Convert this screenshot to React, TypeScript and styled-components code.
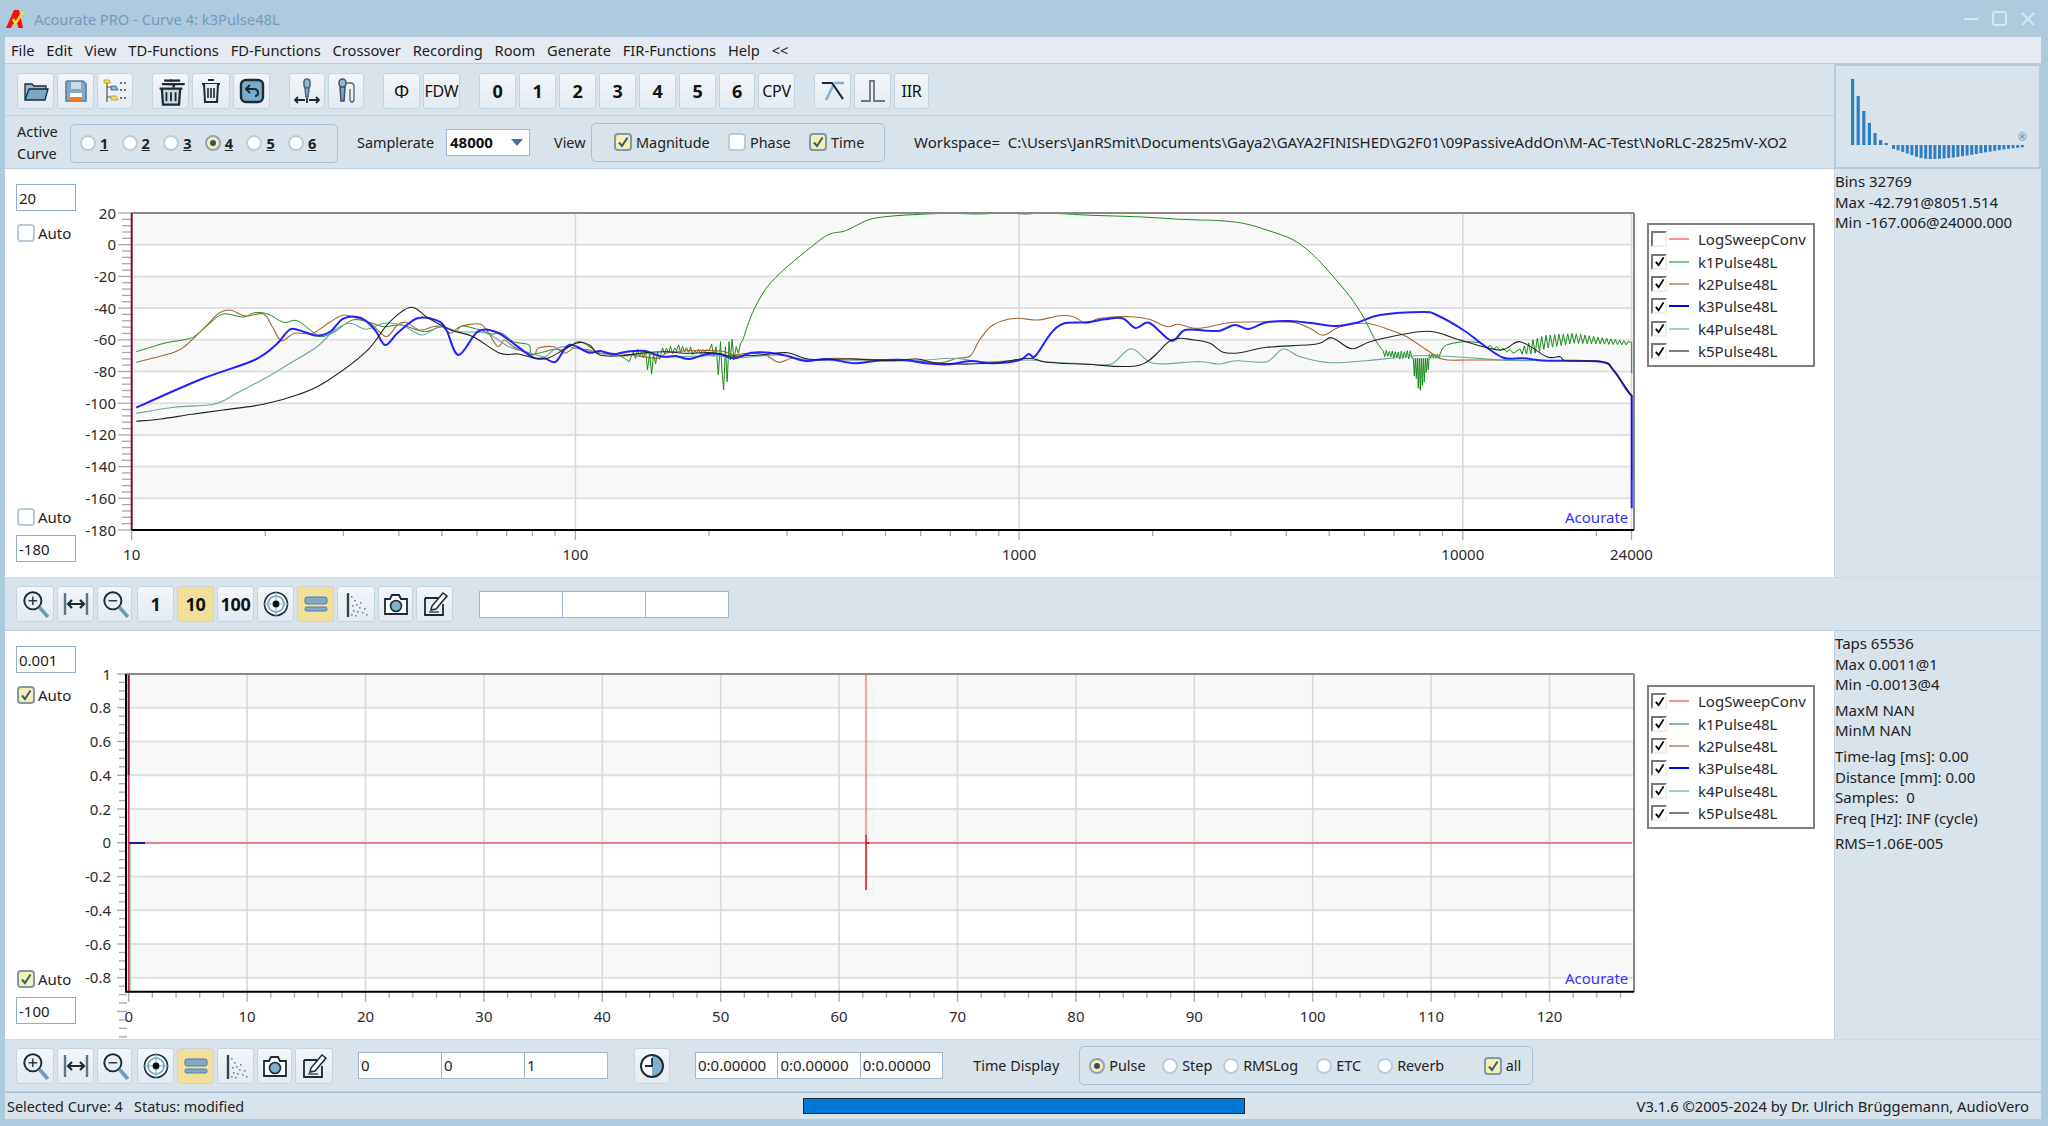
import React from "react";
import styled, { createGlobalStyle } from "styled-components";

const GlobalStyle = createGlobalStyle`
  html, body { margin: 0; padding: 0; background: #aecbdd; }
  * { box-sizing: border-box; }
  body { font-family: "Noto Sans", "Open Sans", sans-serif; font-size: 15px; color: #222; }
`;

const Window = styled.div`
  width: 2048px;
  height: 1126px;
  display: flex;
  flex-direction: column;
  background: #aecbdd;
  overflow: hidden;
`;

const TitleBar = styled.div`
  height: 37px;
  flex: none;
  display: flex;
  align-items: center;
  padding-left: 6px;
  color: #6f9cbb;
  font-size: 14.7px;
  gap: 6px;
`;

const WindowButtons = styled.div`
  margin-left: auto;
  margin-right: 13px;
  display: flex;
  gap: 14px;
  align-items: center;
`;

const Body = styled.div`
  flex: 1;
  display: flex;
  flex-direction: column;
  margin: 0 7px 7px 5px;
  background: #d9e3ec;
`;

const MenuBar = styled.div`
  height: 27px;
  flex: none;
  display: flex;
  align-items: center;
  gap: 11.8px;
  padding-left: 6px;
  background: #e6ebf3;
  border-bottom: 1px solid #bccdda;
  color: #1c1c1c;
  font-size: 14.7px;
`;

const TopBlock = styled.div`
  display: flex;
  height: 105px;
  flex: none;
`;

const ToolStack = styled.div`
  flex: 1;
  display: flex;
  flex-direction: column;
`;

const LogoPanel = styled.div`
  width: 207px;
  border: 2px solid #b4cbdc;
  background: #d9e3ec;
  display: flex;
  align-items: center;
  justify-content: center;
`;

const Toolbar = styled.div<{ $h: number; $top?: boolean }>`
  height: ${(p) => p.$h}px;
  flex: none;
  display: flex;
  align-items: center;
  padding-left: ${(p) => (p.$top ? 12 : 11)}px;
  padding-top: ${(p) => (p.$top ? 2 : 0)}px;
  background: #d9e3ec;
  border-bottom: 1px solid #bccfdf;
`;

const ButtonGroup = styled.div<{ $after?: number }>`
  display: flex;
  gap: 3px;
  margin-right: ${(p) => p.$after ?? 19}px;
`;

const ToolButton = styled.div<{ $w?: number; $on?: boolean; $bold?: boolean; $size?: number }>`
  width: ${(p) => p.$w ?? 37}px;
  height: 36px;
  display: flex;
  align-items: center;
  justify-content: center;
  border: 1px solid #c6d4e0;
  border-radius: 3px;
  background: ${(p) => (p.$on ? "#f1df9c" : "linear-gradient(#f3f6f9, #e3eaf1)")};
  font-size: ${(p) => p.$size ?? 16}px;
  font-weight: ${(p) => (p.$bold ? 700 : 400)};
  color: #111;
  letter-spacing: -0.3px;
`;

const OptionsRow = styled.div`
  height: 53px;
  display: flex;
  align-items: center;
  padding-left: 12px;
  background: #d9e3ec;
  border-bottom: 1px solid #bccfdf;
`;

const ActiveLabel = styled.div`
  width: 53px;
  line-height: 22px;
  color: #222;
  font-size: 14.5px;
`;

const GroupBox = styled.div<{ $w: number; $h: number; $pad: number; $after?: number; $low?: boolean }>`
  width: ${(p) => p.$w}px;
  height: ${(p) => p.$h}px;
  flex: none;
  display: flex;
  align-items: center;
  padding-left: ${(p) => p.$pad}px;
  border: 1.5px solid #a9bfd6;
  border-radius: 5px;
  margin-right: ${(p) => p.$after ?? 0}px;
  margin-top: ${(p) => (p.$low ? 2 : 0)}px;
`;

const Option = styled.div<{ $w: number }>`
  width: ${(p) => p.$w}px;
  flex: none;
  display: flex;
  align-items: center;
  gap: 4px;
  font-size: 14.4px;
`;

const RadioDot = styled.span<{ $on?: boolean }>`
  width: 16px;
  height: 16px;
  flex: none;
  border-radius: 50%;
  border: 2px solid ${(p) => (p.$on ? "#8fa4b5" : "#bccdd9")};
  background: ${(p) => (p.$on ? "#f6eeb4" : "#fff")};
  display: flex;
  align-items: center;
  justify-content: center;
  &::after {
    content: "";
    display: ${(p) => (p.$on ? "block" : "none")};
    width: 6px;
    height: 6px;
    border-radius: 50%;
    background: #3d4b6c;
  }
`;

const CurveNumber = styled.span`
  font-weight: 700;
  text-decoration: underline;
  font-size: 14.5px;
`;

const CheckFrame = styled.span<{ $on?: boolean }>`
  width: 18px;
  height: 18px;
  flex: none;
  display: flex;
  align-items: center;
  justify-content: center;
  border-radius: 4px;
  border: 2px solid ${(p) => (p.$on ? "#7f98ad" : "#b9cad7")};
  background: ${(p) => (p.$on ? "#f7efb2" : "#fff")};
`;

const Plain = styled.div<{ $ml?: number; $w?: number }>`
  margin-left: ${(p) => p.$ml ?? 0}px;
  ${(p) => (p.$w ? `width: ${p.$w}px; flex: none;` : "")}
  white-space: pre;
  font-size: 14.4px;
`;

const WorkspaceText = styled.div`
  white-space: pre;
`;

const SelectBox = styled.div`
  width: 84px;
  height: 27px;
  flex: none;
  display: flex;
  align-items: center;
  justify-content: space-between;
  padding: 0 4px 0 3px;
  background: #fff;
  border: 1.5px solid #a3b9d3;
  font-weight: 700;
  color: #111;
`;

const SelectArrow = styled.span`
  width: 0;
  height: 0;
  border-left: 6px solid transparent;
  border-right: 6px solid transparent;
  border-top: 7px solid #4a6f9e;
  margin-right: 2px;
`;

const Row = styled.div`
  height: 409px;
  flex: none;
  display: flex;
`;

const ChartPane = styled.div`
  width: 1829px;
  flex: none;
  display: flex;
  background: #fff;
  border-bottom: 1px solid #d2d9df;
`;

const ScaleColumn = styled.div`
  width: 71px;
  flex: none;
  display: flex;
  flex-direction: column;
  padding: 15px 0 15px 11px;
`;

const ScaleInput = styled.div`
  width: 60px;
  height: 27px;
  flex: none;
  display: flex;
  align-items: center;
  padding-left: 2px;
  border: 1.5px solid #93accb;
  background: #fff;
  color: #222;
`;

const AutoRow = styled.div<{ $bottom?: boolean }>`
  display: flex;
  align-items: center;
  gap: 3px;
  padding-left: 1px;
  margin-top: ${(p) => (p.$bottom ? "auto" : "12px")};
  margin-bottom: ${(p) => (p.$bottom ? "8px" : "0")};
`;

const ChartSvg = styled.svg`
  width: 1571px;
  height: 407px;
  flex: none;
  display: block;
  overflow: visible;
`;

const AxisText = styled.text`
  font-family: "Noto Sans", "Open Sans", sans-serif;
  font-size: 15px;
  fill: #2b2b2b;
`;

const BrandText = styled.text`
  font-family: "Noto Sans", "Open Sans", sans-serif;
  font-size: 15px;
  fill: #3333ff;
`;

const RegMark = styled.text`
  font-family: "Noto Sans", sans-serif;
  font-size: 10px;
  fill: #3a86c6;
`;

const Legend = styled.div<{ $top: number }>`
  width: 168px;
  height: 144px;
  flex: none;
  margin-top: ${(p) => p.$top}px;
  padding: 3px 0 0 2px;
  border: 2px solid #808080;
  background: #fff;
`;

const LegendRow = styled.div`
  height: 22.4px;
  display: flex;
  align-items: center;
  color: #2b2b2b;
  white-space: nowrap;
`;

const LegendBox = styled.span`
  width: 16px;
  height: 16px;
  flex: none;
  display: flex;
  align-items: center;
  justify-content: center;
  border-top: 2px solid #777;
  border-left: 2px solid #777;
  border-right: 2px solid #eee;
  border-bottom: 2px solid #eee;
`;

const LegendSwatch = styled.span<{ $c: string }>`
  width: 20px;
  height: 2px;
  flex: none;
  margin: 0 9px 0 2px;
  background: ${(p) => p.$c};
`;

const InfoPanel = styled.div`
  flex: 1;
  padding: 2px 0 0 0;
  border-left: 1px solid #c6d3de;
  border-bottom: 1px solid #d2d9df;
  background: #d9e3ec;
`;

const InfoLine = styled.div<{ $gap?: number }>`
  height: 20.6px;
  line-height: 20.6px;
  margin-top: ${(p) => p.$gap ?? 0}px;
  white-space: pre;
  color: #222;
`;

const FieldStrip = styled.div<{ $ml: number; $w: number }>`
  display: flex;
  margin-left: ${(p) => p.$ml}px;
  & > div {
    width: ${(p) => p.$w}px;
    height: 27px;
    padding-left: 2px;
    line-height: 25px;
    background: #fff;
    border: 1.5px solid #9fb5d1;
    margin-right: -1px;
    color: #222;
  }
`;

const StatusBar = styled.div`
  flex: 1;
  display: flex;
  align-items: center;
  padding: 0 12px 0 2px;
  border-top: 1px solid #a9c3da;
  background: #d9e3ec;
`;

const ProgressBar = styled.div`
  width: 442px;
  height: 16px;
  flex: none;
  background: #0078d7;
  border: 1px solid #1c2a36;
`;

const VersionText = styled.div`
  margin-left: auto;
  font-size: 14.75px;
`;

const WaveSvg = styled.svg`
  margin: 12px 0 0 5px;
  flex: none;
`;

// window glyphs -------------------------------------------------------------

const AppLogo = () => (
  <svg width="22" height="22" viewBox="0 0 22 22">
    <path d="M0 20 L8 2 H13 L17 20 H12.5 L11.5 16 H7 L5 20 Z" fill="#ee1111" />
    <path d="M7 11 L9.5 15.5 L17 4" fill="none" stroke="#f4e21a" strokeWidth="2.6" />
  </svg>
);

const Check = ({ c = "#3b5a80", s = 12 }: { c?: string; s?: number }) => (
  <svg width={s} height={s} viewBox="0 0 12 12">
    <path d="M2 6.5 L5 10 L10.5 1.5" fill="none" stroke={c} strokeWidth="2" />
  </svg>
);

const Icon = ({ children, s = 28 }: { children: React.ReactNode; s?: number }) => (
  <svg width={s} height={s} viewBox="0 0 28 28" fill="none" stroke="#1d2a33" strokeWidth="1.6">
    {children}
  </svg>
);

const FolderIcon = () => (
  <Icon>
    <path d="M3 22 V7 H10 L12 9 H24 V12" fill="#8fb9d4" strokeWidth="1.3" />
    <path d="M3 23 L7 12 H26 L23 23 Z" fill="#7aa9c8" strokeWidth="1.3" />
  </Icon>
);

const SaveIcon = () => (
  <Icon>
    <path d="M5 4 H21 L24 7 V24 H4 V5 Z" fill="#7fa9c8" stroke="#5b7f9c" />
    <rect x="9" y="5" width="10" height="7" fill="#c9dbe8" stroke="none" />
    <rect x="8" y="16" width="12" height="8" fill="#fff" stroke="none" />
    <rect x="8" y="20" width="12" height="4" fill="#f47a20" stroke="none" />
  </Icon>
);

const TreeIcon = () => (
  <Icon>
    <path d="M6 5 V25 M6 10 H10 M6 20 H10" stroke="#555" strokeWidth="1.2" />
    <path d="M3 3 H8 L10 6 H3 Z" fill="#f3df5a" stroke="#b09a20" strokeWidth="0.8" />
    <path d="M10 9 H15 L17 13 H10 Z" fill="#8db6d2" stroke="#456" strokeWidth="0.8" />
    <path d="M10 19 H15 L17 23 H10 Z" fill="#f3df5a" stroke="#b09a20" strokeWidth="0.8" />
    <path d="M19 6 H26 M19 13 H26 M19 21 H26" stroke="#444" strokeDasharray="2 2" strokeWidth="1.4" />
  </Icon>
);

const BinsIcon = () => (
  <Icon s={32}>
    <path d="M8 5 H15 M6 8 H17 L16 11" strokeWidth="2" />
    <path d="M13 5 H22 M11 8 H26" strokeWidth="2" />
    <path d="M4 12 H24 M6 12 L7 26 H21 L22 12" strokeWidth="2" fill="#c8dae6" />
    <path d="M10 15 V23 M14 15 V23 M18 15 V23" strokeWidth="1.6" />
  </Icon>
);

const BinIcon = () => (
  <Icon>
    <path d="M11 3 H17 M5 7 H23" strokeWidth="2.2" />
    <path d="M7 7 L8 25 H20 L21 7" strokeWidth="2" fill="#e4ecf2" />
    <path d="M11 11 V21 M14 11 V21 M17 11 V21" strokeWidth="1.6" />
  </Icon>
);

const RestoreIcon = () => (
  <Icon>
    <rect x="3" y="3" width="22" height="22" rx="5" fill="#7aaccb" strokeWidth="2.4" />
    <path d="M9 12 H16 Q20 12 20 16 Q20 19 17 19" strokeWidth="2" />
    <path d="M12 8 L8 12 L12 16" strokeWidth="2" />
  </Icon>
);

const MicMoveIcon = () => (
  <Icon>
    <rect x="11" y="2" width="6" height="9" rx="3" fill="#8fb9d4" stroke="#567" />
    <path d="M12 11 L13 20 H15 L16 11 Z" fill="#8fb9d4" stroke="#567" />
    <path d="M2 23 H12 M16 23 H26 M5 20 L2 23 L5 26 M23 20 L26 23 L23 26 M14 21 V26" strokeWidth="1.8" />
  </Icon>
);

const MicCableIcon = () => (
  <Icon>
    <rect x="7" y="2" width="7" height="8" rx="3.5" fill="#8fb9d4" stroke="#456" />
    <path d="M8 10 L9 24 H12 L13 10 Z" fill="#7aa9c8" stroke="#456" />
    <path d="M15 6 H19 Q22 6 22 10 V22 Q22 25 20 25 Q18 25 18 22 V12" stroke="#566" strokeWidth="1.3" />
  </Icon>
);

const CrossoverIcon = () => (
  <Icon>
    <path d="M14 9 L7 23" stroke="#84b5d2" strokeWidth="2.6" />
    <path d="M3 6 H13 L24 22" strokeWidth="2.2" />
    <path d="M25 6 H15" stroke="#84b5d2" strokeWidth="2.6" />
  </Icon>
);

const PulseIcon = () => (
  <Icon>
    <path d="M2 24 H11 V4 H15 V24 H26" stroke="#6c7780" strokeWidth="1.8" />
  </Icon>
);

const ZoomIcon = ({ plus }: { plus: boolean }) => (
  <Icon s={30}>
    <circle cx="12" cy="11" r="8" fill="#e7eff5" strokeWidth="1.8" />
    <path d="M18 17 L26 26" stroke="#6b9abc" strokeWidth="3.4" />
    <path d="M8 11 H16" strokeWidth="1.3" />
    {plus && <path d="M12 7 V15" strokeWidth="1.3" />}
  </Icon>
);

const FitIcon = () => (
  <Icon>
    <path d="M3 3 V25 M25 3 V25" stroke="#5e7484" strokeWidth="2.4" />
    <path d="M7 14 H21 M10 10 L6 14 L10 18 M18 10 L22 14 L18 18" strokeWidth="2.2" />
  </Icon>
);

const TargetIcon = () => (
  <Icon>
    <circle cx="14" cy="14" r="11.5" fill="#fff" strokeWidth="1.6" />
    <circle cx="14" cy="14" r="8" stroke="#7fb0ce" strokeWidth="2" />
    <path d="M14 1 V27 M1 14 H27" stroke="#7fb0ce" strokeWidth="1" />
    <circle cx="14" cy="14" r="3.4" fill="#111" stroke="none" />
  </Icon>
);

const BarsIcon = () => (
  <Icon>
    <rect x="3" y="7" width="22" height="7" rx="2" fill="#7ea9c8" stroke="#5d7f99" strokeWidth="1" />
    <rect x="3" y="17" width="22" height="4" rx="1.5" fill="#7ea9c8" stroke="#5d7f99" strokeWidth="1" />
  </Icon>
);

const ScatterIcon = () => {
  const dots = [[9, 6], [12, 10], [10, 15], [14, 14], [17, 17], [11, 20], [15, 21], [20, 22], [18, 12], [13, 25], [22, 18], [9, 24], [24, 24]];
  return (
    <Icon>
      <path d="M6 3 V27" stroke="#344" strokeWidth="2.4" />
      {dots.map(([x, y]) => (
        <rect key={`${x}-${y}`} x={x} y={y} width="1.6" height="1.6" fill="#6c8ba0" stroke="none" />
      ))}
    </Icon>
  );
};

const CameraIcon = () => (
  <Icon>
    <path d="M3 9 H8 L10 5 H17 L19 9 H25 V24 H3 Z" fill="#fff" strokeWidth="1.8" />
    <circle cx="14" cy="16" r="5.5" fill="#7fb0ce" strokeWidth="1.6" />
  </Icon>
);

const NoteIcon = () => (
  <Icon>
    <path d="M4 8 H17 M4 8 V25 H22 V14" strokeWidth="1.8" fill="#e7eef3" />
    <path d="M10 20 L11 16 L22 3 L26 6 L15 19 Z" fill="#fff" strokeWidth="1.5" />
    <path d="M8 22 H18" strokeWidth="1.2" />
  </Icon>
);

const ClockIcon = () => (
  <Icon>
    <circle cx="14" cy="14" r="11" fill="#fff" stroke="none" />
    <path d="M14 3 A11 11 0 0 1 14 25 Z" fill="#7fb0ce" stroke="none" />
    <circle cx="14" cy="14" r="11" strokeWidth="2" />
    <path d="M14 6 V14 H7" strokeWidth="1.8" />
  </Icon>
);

const WaveLogo = () => {
  const tall = [66, 49, 34, 22, 12, 5, 2];
  const deep = Array.from({ length: 29 }, (_, i) => {
    const t = (i - 8) / 10;
    return Math.max(1.5, 14 * Math.exp(-t * t * (i < 8 ? 2 : 0.45)));
  });
  return (
    <WaveSvg width="180" height="88" viewBox="0 0 180 88">
      {tall.map((h, i) => (
        <rect key={i} x={1 + i * 5.6} y={66 - h} width="3.2" height={h} fill="#2f7fc2" />
      ))}
      {deep.map((h, i) => (
        <rect key={i} x={42 + i * 4.6} y={66} width="3" height={h} fill="#2f7fc2" />
      ))}
      <RegMark x="168" y="62">®</RegMark>
    </WaveSvg>
  );
};

// chart data, traced off the plot in three pieces ----------------------------

type Pt = [number, number];

const piece = (ox: number, sx: number, pts: Pt[]): Pt[] => pts.map(([x, y]) => [ox + x / sx, 190 + y / 3]);
const left = (pts: Pt[]) => piece(0, 2.24, pts);
const mid = (pts: Pt[]) => piece(600, 2.24, pts);
const right = (pts: Pt[]) => piece(1200, 3, pts);

const zigzag = (from: number, to: number, step: number, hi: (x: number) => number, lo: (x: number) => number): Pt[] => {
  const out: Pt[] = [];
  let up = true;
  for (let x = from; x < to; x += step) {
    out.push([x, up ? hi(x) : lo(x)]);
    up = !up;
  }
  return out;
};

const fmt = ([x, y]: Pt) => `${x.toFixed(1)},${y.toFixed(1)}`;

const lineTo = (pts: Pt[]) => pts.map((p) => `L${fmt(p)}`).join(" ");

// catmull-rom through the traced points, the plot lines are smooth
const curveTo = (pts: Pt[]) => {
  let d = `L${fmt(pts[0])}`;
  for (let i = 0; i < pts.length - 1; i++) {
    const a = pts[i - 1] ?? pts[i];
    const b = pts[i];
    const c = pts[i + 1];
    const e = pts[i + 2] ?? c;
    const c1: Pt = [b[0] + (c[0] - a[0]) / 6, b[1] + (c[1] - a[1]) / 6];
    const c2: Pt = [c[0] - (e[0] - b[0]) / 6, c[1] - (e[1] - b[1]) / 6];
    d += ` C${fmt(c1)} ${fmt(c2)} ${fmt(c)}`;
  }
  return d;
};

const startAt = (d: string) => d.replace(/^L/, "M");

const sawCenter = (x: number) => (x < 1040 ? 485 - ((x - 960) / 80) * 30 : x < 1120 ? 455 - ((x - 1040) / 80) * 10 : 445 + ((x - 1120) / 170) * 15);
const sawAmp = (x: number) => (x < 1000 ? 8 + (x - 960) / 3 : 22 - ((x - 1000) / 290) * 17);
const bell = (x: number, c: number, w: number) => Math.exp(-(((x - c) / w) ** 2));
const wobble = (x: number) => Math.sin(x * 12.9898) * 0.5 + Math.sin(x * 4.1) * 0.5;

const k1Path = startAt(
  [
    curveTo([
      ...left([[305, 485], [335, 473], [370, 459], [420, 447], [440, 435], [470, 400], [500, 372], [545, 381], [570, 368], [600, 372], [635, 397], [665, 392], [700, 425], [720, 440], [750, 425], [790, 390], [830, 398], [860, 410], [900, 405], [950, 425], [990, 410], [1020, 425], [1035, 408], [1075, 420], [1100, 432], [1125, 430], [1150, 455], [1185, 465], [1190, 492], [1220, 485], [1240, 478], [1265, 478], [1295, 455], [1320, 470]]),
      ...mid([[0, 490], [40, 495], [65, 515]]),
    ]),
    lineTo(mid(zigzag(75, 135, 4.5, (x) => 486 + wobble(x) * 10, (x) => 505 + wobble(x) * 8 + 52 * bell(x, 113, 9)))),
    lineTo(mid(zigzag(140, 250, 4.5, (x) => 468 + (x - 140) * 0.1 + wobble(x) * 9, (x) => 488 + wobble(x + 3) * 7))),
    lineTo(mid([[250, 462], [255, 500], [260, 470], [265, 555], [270, 455], [273, 540], [277, 600], [281, 470], [285, 575], [289, 455], [292, 510], [296, 448], [300, 510], [305, 470], [310, 490], [315, 460]])),
    curveTo(mid([[320, 450], [335, 390], [350, 345], [375, 290], [415, 235], [460, 185], [510, 135], [550, 122], [600, 90], [640, 80], [700, 74], [780, 70], [850, 72], [900, 68], [950, 72], [1000, 69], [1100, 76], [1200, 80], [1300, 88]])),
    curveTo(right([[0, 90], [60, 92], [130, 100], [200, 120], [280, 150], [340, 195], [400, 260], [450, 320], [490, 380], [520, 440], [545, 478]])),
    lineTo(right(zigzag(550, 640, 4.5, (x) => 484 + wobble(x) * 3, (x) => 500 + (x - 550) / 12 + wobble(x) * 4))),
    lineTo(right(zigzag(640, 688, 3, () => 505, (x) => 600 - Math.abs(x - 660) * 2.6 + wobble(x) * 12))),
    lineTo(right(zigzag(688, 722, 4, () => 492, () => 505))),
    curveTo(right([[725, 480], [740, 465], [790, 455], [840, 458]])),
    lineTo(right(zigzag(850, 950, 10, (x) => 462 + (x - 850) / 5, (x) => 472 + (x - 850) / 5))),
    lineTo(right(zigzag(960, 1290, 6.5, (x) => sawCenter(x) - sawAmp(x), (x) => sawCenter(x) + sawAmp(x)))),
    lineTo(right([[1295, 458], [1295, 550]])),
  ].join(" "),
);

const k2Path = startAt(
  curveTo([
    ...left([[305, 517], [390, 487], [420, 462], [460, 410], [490, 370], [515, 360], [550, 378], [590, 372], [610, 410], [630, 452], [660, 430], [700, 430], [740, 395], [770, 375], [800, 385], [830, 400], [865, 440], [890, 405], [910, 397], [940, 420], [970, 410], [990, 410], [1010, 430], [1030, 410], [1075, 402], [1095, 430], [1115, 470], [1130, 450], [1150, 470], [1195, 495], [1205, 475], [1240, 470], [1265, 490], [1285, 475], [1320, 480]]),
    ...mid([[0, 490], [30, 490], [70, 495], [130, 505], [150, 488], [200, 482], [270, 483], [300, 495], [330, 490], [370, 495], [400, 517], [430, 505], [470, 512], [520, 505], [600, 508], [700, 512], [760, 518], [800, 505], [830, 497], [850, 450], [880, 405], [930, 385], [980, 390], [1030, 377], [1060, 380], [1090, 400], [1120, 385], [1190, 380], [1230, 388], [1270, 410], [1295, 403], [1330, 415]]),
    ...right([[20, 412], [50, 405], [100, 397], [200, 395], [280, 397], [330, 415], [370, 436], [420, 410], [500, 400], [570, 420], [620, 440], [680, 480], [730, 508], [800, 510], [930, 510]]),
  ]),
);

const k3Path = startAt(
  curveTo([
    ...left([[305, 653], [450, 568], [570, 510], [620, 462], [650, 418], [680, 425], [710, 437], [740, 425], [770, 385], [810, 385], [840, 420], [863, 465], [890, 430], [935, 385], [980, 392], [1000, 420], [1027, 495], [1070, 425], [1110, 425], [1150, 460], [1195, 503], [1220, 505], [1245, 515], [1275, 465], [1320, 488]]),
    ...mid([[0, 483], [30, 493], [60, 485], [100, 483], [140, 500], [170, 498], [200, 507], [240, 492], [270, 492], [300, 505], [340, 488], [380, 488], [420, 498], [460, 513], [510, 507], [570, 520], [620, 512], [680, 510], [730, 520], [780, 523], [830, 513], [880, 520], [940, 510], [960, 492], [975, 498], [1010, 430], [1040, 400], [1090, 397], [1130, 388], [1170, 385], [1200, 414], [1230, 398], [1280, 452], [1310, 420]]),
    ...right([[20, 422], [60, 422], [105, 405], [145, 417], [200, 397], [270, 393], [340, 400], [410, 408], [470, 398], [540, 375], [670, 366], [710, 375], [790, 420], [850, 465], [910, 503], [970, 505], [1040, 512], [1200, 515], [1240, 540], [1280, 600], [1295, 617]]),
  ]) + " " + lineTo(right([[1295, 955]])),
);

const k4Path = startAt(
  curveTo([
    ...left([[305, 670], [390, 652], [480, 642], [530, 610], [600, 560], [650, 520], [710, 470], [750, 420], [785, 400], [820, 418], [860, 400], [900, 405], [945, 435], [985, 410], [1030, 425], [1090, 430], [1140, 470], [1190, 490], [1220, 500], [1240, 480], [1270, 470]]),
    ...mid([[0, 490], [60, 497], [100, 490], [150, 500], [260, 497], [300, 505], [400, 495], [470, 510], [600, 512], [700, 512], [790, 505], [860, 515], [960, 510], [1000, 515], [1090, 522], [1145, 522], [1190, 476], [1240, 520], [1330, 515]]),
    ...right([[20, 517], [60, 522], [110, 512], [200, 515], [250, 477], [300, 500], [390, 518], [500, 512], [650, 497], [760, 500], [900, 510], [1000, 512]]),
  ]),
);

const k5Path = startAt(
  curveTo([
    ...left([[305, 694], [360, 687], [430, 673], [500, 660], [590, 643], [670, 613], [730, 575], [820, 485], [870, 400], [920, 352], [960, 385], [1010, 420], [1060, 440], [1120, 490], [1160, 492], [1200, 505], [1230, 503], [1290, 460], [1320, 465]]),
    ...mid([[0, 495], [50, 497], [100, 488], [150, 485], [190, 490], [250, 488], [290, 498], [360, 495], [420, 488], [470, 508], [560, 507], [650, 512], [710, 507], [760, 520], [870, 520], [960, 505], [1000, 517], [1090, 523], [1210, 525], [1280, 450], [1330, 450]]),
    ...right([[30, 460], [70, 487], [120, 488], [200, 472], [350, 462], [395, 443], [455, 476], [520, 452], [680, 424], [780, 450], [900, 480], [960, 455], [1040, 500], [1080, 500], [1100, 512], [1210, 515], [1240, 540], [1295, 617]]),
  ]) + " " + lineTo(right([[1295, 870]])),
);

const legendCurves = [
  { name: "LogSweepConv", color: "#ff8f8f" },
  { name: "k1Pulse48L", color: "#86c08a" },
  { name: "k2Pulse48L", color: "#c2a488" },
  { name: "k3Pulse48L", color: "#0000ff" },
  { name: "k4Pulse48L", color: "#a2cbcb" },
  { name: "k5Pulse48L", color: "#808080" },
];

const PLOT_RIGHT = 1634;

const MagnitudeChart = () => {
  const top = 213;
  const bottom = 530;
  const x0 = 131.7;
  const decade = 443.7;
  const fx = (f: number) => x0 + Math.log10(f / 10) * decade;
  const step = (bottom - top) / 10;
  const minor: number[] = [];
  for (const d of [10, 100, 1000]) for (let m = 2; m < 10; m++) minor.push(d * m);
  minor.push(20000);
  return (
    <ChartSvg viewBox="76 169 1571 407">
      <rect x={x0} y={top} width={PLOT_RIGHT - x0} height={bottom - top} fill="#fff" />
      {Array.from({ length: 10 }, (_, i) =>
        i % 2 === 0 ? <rect key={i} x={x0} y={top + i * step} width={PLOT_RIGHT - x0} height={step} fill="#f8f8f8" /> : null,
      )}
      {Array.from({ length: 9 }, (_, i) => (
        <line key={i} x1={x0} x2={PLOT_RIGHT} y1={top + (i + 1) * step} y2={top + (i + 1) * step} stroke="#e0e0e0" strokeWidth="2" />
      ))}
      {[100, 1000, 10000, 24000].map((f) => (
        <line key={f} x1={fx(f)} x2={fx(f)} y1={top} y2={bottom} stroke="#d9d9d9" strokeWidth="1.6" />
      ))}
      {Array.from({ length: 51 }, (_, i) => (
        <line key={i} x1={i % 5 === 0 ? 118 : 122} x2={x0} y1={top + i * (step / 5)} y2={top + i * (step / 5)} stroke="#a8a8a8" strokeWidth="1.3" />
      ))}
      {minor.map((f) => (
        <line key={f} x1={fx(f)} x2={fx(f)} y1={bottom} y2={bottom + 6} stroke="#a8a8a8" strokeWidth="1.3" />
      ))}
      {[10, 100, 1000, 10000, 24000].map((f) => (
        <line key={f} x1={fx(f)} x2={fx(f)} y1={bottom} y2={bottom + 10} stroke="#a8a8a8" strokeWidth="1.3" />
      ))}
      <path d={k1Path} fill="none" stroke="#1a8c1a" strokeWidth="1" />
      <path d={k2Path} fill="none" stroke="#a5652f" strokeWidth="1.1" />
      <path d={k4Path} fill="none" stroke="#6aa5a5" strokeWidth="1.1" />
      <path d={k3Path} fill="none" stroke="#2222ff" strokeWidth="2" />
      <path d={k5Path} fill="none" stroke="#222" strokeWidth="1.1" />
      <line x1={x0} x2={PLOT_RIGHT} y1={top} y2={top} stroke="#888" strokeWidth="2" />
      <line x1={PLOT_RIGHT} x2={PLOT_RIGHT} y1={top} y2={bottom} stroke="#888" strokeWidth="2" />
      <line x1={x0} x2={x0} y1={top} y2={bottom} stroke="#7a0a3c" strokeWidth="2" />
      <line x1={x0} x2={PLOT_RIGHT} y1={bottom} y2={bottom} stroke="#000" strokeWidth="2" />
      {Array.from({ length: 11 }, (_, i) => (
        <AxisText key={i} x={116} y={top + i * step + 5.5} textAnchor="end">{20 - i * 20}</AxisText>
      ))}
      {[10, 100, 1000, 10000, 24000].map((f) => (
        <AxisText key={f} x={fx(f)} y={560} textAnchor="middle">{f}</AxisText>
      ))}
      <BrandText x={1565} y={523}>Acourate</BrandText>
    </ChartSvg>
  );
};

const TimeChart = () => {
  const top = 674;
  const bottom = 991.7;
  const axis = 127;
  const zero = 843;
  const pitch = 33.75;
  const fx = (t: number) => 128.7 + t * 11.84;
  const labels = ["1", "0.8", "0.6", "0.4", "0.2", "0", "-0.2", "-0.4", "-0.6", "-0.8"];
  return (
    <ChartSvg viewBox="76 631 1571 407">
      {Array.from({ length: 9 }, (_, i) =>
        i % 2 === 0 ? <rect key={i} x={axis} y={top + i * pitch} width={PLOT_RIGHT - axis} height={pitch} fill="#f8f8f8" /> : null,
      )}
      {labels.map((l, i) => {
        const y = top + i * pitch;
        return <line key={l} x1={axis} x2={PLOT_RIGHT} y1={y} y2={y} stroke="#e0e0e0" strokeWidth="2" />;
      })}
      {Array.from({ length: 13 }, (_, i) => (
        <line key={i} x1={fx(i * 10)} x2={fx(i * 10)} y1={top} y2={bottom} stroke="#d9d9d9" strokeWidth="1.6" />
      ))}
      {Array.from({ length: 48 }, (_, i) => (
        <line key={i} x1={i % 4 === 0 ? 117 : 119} x2={axis} y1={top + (i * pitch) / 4} y2={top + (i * pitch) / 4} stroke="#a8a8a8" strokeWidth="1.3" />
      ))}
      {Array.from({ length: 64 }, (_, i) => (
        <line key={i} x1={fx(i * 2)} x2={fx(i * 2)} y1={bottom} y2={bottom + (i % 5 === 0 ? 10 : 6)} stroke="#a8a8a8" strokeWidth="1.3" />
      ))}
      <line x1={130} x2={130} y1={zero} y2={bottom} stroke="#86c98a" strokeWidth="1.4" />
      <line x1={128.7} x2={128.7} y1={775} y2={bottom} stroke="#d8205f" strokeWidth="1.6" />
      <line x1={128.7} x2={128.7} y1={top} y2={775} stroke="#7a0a3c" strokeWidth="2" />
      <line x1={128} x2={1632} y1={zero} y2={zero} stroke="#ea2030" strokeWidth="1.2" />
      <line x1={129} x2={145} y1={zero} y2={zero} stroke="#1d1d9a" strokeWidth="2" />
      <line x1={866} x2={866} y1={top} y2={835} stroke="#ff7a7a" strokeWidth="1.4" />
      <line x1={866} x2={866} y1={835} y2={890} stroke="#f01010" strokeWidth="1.6" />
      <line x1={866} x2={869} y1={zero} y2={zero} stroke="#f01010" strokeWidth="2" />
      <line x1={axis} x2={PLOT_RIGHT} y1={top} y2={top} stroke="#888" strokeWidth="2" />
      <line x1={PLOT_RIGHT} x2={PLOT_RIGHT} y1={top} y2={bottom} stroke="#888" strokeWidth="2" />
      <line x1={axis - 1} x2={axis - 1} y1={top} y2={bottom} stroke="#000" strokeWidth="2" />
      <line x1={axis - 2} x2={PLOT_RIGHT} y1={bottom} y2={bottom} stroke="#000" strokeWidth="2" />
      {labels.map((l, i) => (
        <AxisText key={l} x={111} y={top + i * pitch + 5.5} textAnchor="end">{l}</AxisText>
      ))}
      {Array.from({ length: 13 }, (_, i) => (
        <AxisText key={i} x={fx(i * 10)} y={1022} textAnchor="middle">{i * 10}</AxisText>
      ))}
      <BrandText x={1565} y={984}>Acourate</BrandText>
    </ChartSvg>
  );
};

const CurveLegend = ({ top, first }: { top: number; first: boolean }) => (
  <Legend $top={top}>
    {legendCurves.map((c, i) => (
      <LegendRow key={c.name}>
        <LegendBox>{(i > 0 || first) && <Check c="#000" s={11} />}</LegendBox>
        <LegendSwatch $c={c.color} />
        {c.name}
      </LegendRow>
    ))}
  </Legend>
);

const AutoCheck = ({ on, bottom }: { on: boolean; bottom?: boolean }) => (
  <AutoRow $bottom={bottom}>
    <CheckFrame $on={on}>{on && <Check />}</CheckFrame>
    Auto
  </AutoRow>
);

const ViewTools = () => (
  <>
    <ToolButton $w={38}><ZoomIcon plus /></ToolButton>
    <ToolButton><FitIcon /></ToolButton>
    <ToolButton $w={35}><ZoomIcon plus={false} /></ToolButton>
  </>
);

const menus = ["File", "Edit", "View", "TD-Functions", "FD-Functions", "Crossover", "Recording", "Room", "Generate", "FIR-Functions", "Help", "<<"];

const App = () => (
  <Window>
    <GlobalStyle />
    <TitleBar>
      <AppLogo />
      Acourate PRO - Curve 4: k3Pulse48L
      <WindowButtons>
        <svg width="14" height="14" viewBox="0 0 14 14"><path d="M0 7 H14" stroke="#d8e6f0" strokeWidth="2" /></svg>
        <svg width="15" height="15" viewBox="0 0 15 15"><rect x="1" y="1" width="13" height="13" rx="2" fill="none" stroke="#d8e6f0" strokeWidth="2" /></svg>
        <svg width="14" height="14" viewBox="0 0 14 14"><path d="M1 1 L13 13 M13 1 L1 13" stroke="#d8e6f0" strokeWidth="2" /></svg>
      </WindowButtons>
    </TitleBar>
    <Body>
      <MenuBar>
        {menus.map((m) => <span key={m}>{m}</span>)}
      </MenuBar>
      <TopBlock>
        <ToolStack>
          <Toolbar $h={52} $top>
            <ButtonGroup>
              <ToolButton><FolderIcon /></ToolButton>
              <ToolButton><SaveIcon /></ToolButton>
              <ToolButton $w={36}><TreeIcon /></ToolButton>
            </ButtonGroup>
            <ButtonGroup>
              <ToolButton><BinsIcon /></ToolButton>
              <ToolButton $w={38}><BinIcon /></ToolButton>
              <ToolButton><RestoreIcon /></ToolButton>
            </ButtonGroup>
            <ButtonGroup>
              <ToolButton $w={36}><MicMoveIcon /></ToolButton>
              <ToolButton $w={36}><MicCableIcon /></ToolButton>
            </ButtonGroup>
            <ButtonGroup>
              <ToolButton $size={18}>Φ</ToolButton>
              <ToolButton>FDW</ToolButton>
            </ButtonGroup>
            <ButtonGroup>
              {["0", "1", "2", "3", "4", "5"].map((n) => (
                <ToolButton key={n} $bold $size={18}>{n}</ToolButton>
              ))}
              <ToolButton $w={36} $bold $size={18}>6</ToolButton>
              <ToolButton>CPV</ToolButton>
            </ButtonGroup>
            <ButtonGroup>
              <ToolButton><CrossoverIcon /></ToolButton>
              <ToolButton><PulseIcon /></ToolButton>
              <ToolButton $w={35}>IIR</ToolButton>
            </ButtonGroup>
          </Toolbar>
          <OptionsRow>
            <ActiveLabel>Active<br />Curve</ActiveLabel>
            <GroupBox $w={268} $h={39} $pad={9} $low>
              {[1, 2, 3, 4, 5, 6].map((n) => (
                <Option key={n} $w={41.6}>
                  <RadioDot $on={n === 4} />
                  <CurveNumber>{n}</CurveNumber>
                </Option>
              ))}
            </GroupBox>
            <Plain $ml={19} $w={89}>Samplerate</Plain>
            <SelectBox>48000<SelectArrow /></SelectBox>
            <Plain $ml={24} $w={37}>View</Plain>
            <GroupBox $w={294} $h={39} $pad={22} $after={29}>
              <Option $w={114}><CheckFrame $on><Check /></CheckFrame>Magnitude</Option>
              <Option $w={81}><CheckFrame />Phase</Option>
              <Option $w={60}><CheckFrame $on><Check /></CheckFrame>Time</Option>
            </GroupBox>
            <WorkspaceText>{"Workspace=  C:\\Users\\JanRSmit\\Documents\\Gaya2\\GAYA2FINISHED\\G2F01\\09PassiveAddOn\\M-AC-Test\\NoRLC-2825mV-XO2"}</WorkspaceText>
          </OptionsRow>
        </ToolStack>
        <LogoPanel><WaveLogo /></LogoPanel>
      </TopBlock>
      <Row>
        <ChartPane>
          <ScaleColumn>
            <ScaleInput>20</ScaleInput>
            <AutoCheck on={false} />
            <AutoCheck on={false} bottom />
            <ScaleInput>-180</ScaleInput>
          </ScaleColumn>
          <MagnitudeChart />
          <CurveLegend top={54} first={false} />
        </ChartPane>
        <InfoPanel>
          <InfoLine>Bins 32769</InfoLine>
          <InfoLine>Max -42.791@8051.514</InfoLine>
          <InfoLine>Min -167.006@24000.000</InfoLine>
        </InfoPanel>
      </Row>
      <Toolbar $h={53}>
        <ButtonGroup $after={5}><ViewTools /></ButtonGroup>
        <ButtonGroup $after={26}>
          <ToolButton $bold $size={18}>1</ToolButton>
          <ToolButton $on $bold $size={18}>10</ToolButton>
          <ToolButton $bold $size={18}>100</ToolButton>
          <ToolButton><TargetIcon /></ToolButton>
          <ToolButton $on><BarsIcon /></ToolButton>
          <ToolButton $w={38}><ScatterIcon /></ToolButton>
          <ToolButton $w={35}><CameraIcon /></ToolButton>
          <ToolButton $w={37}><NoteIcon /></ToolButton>
        </ButtonGroup>
        <FieldStrip $ml={0} $w={84}>
          <div />
          <div />
          <div />
        </FieldStrip>
      </Toolbar>
      <Row>
        <ChartPane>
          <ScaleColumn>
            <ScaleInput>0.001</ScaleInput>
            <AutoCheck on />
            <AutoCheck on bottom />
            <ScaleInput>-100</ScaleInput>
          </ScaleColumn>
          <TimeChart />
          <CurveLegend top={54} first />
        </ChartPane>
        <InfoPanel>
          <InfoLine>Taps 65536</InfoLine>
          <InfoLine>Max 0.0011@1</InfoLine>
          <InfoLine>Min -0.0013@4</InfoLine>
          <InfoLine $gap={5}>MaxM NAN</InfoLine>
          <InfoLine>MinM NAN</InfoLine>
          <InfoLine $gap={5}>Time-lag [ms]: 0.00</InfoLine>
          <InfoLine>Distance [mm]: 0.00</InfoLine>
          <InfoLine>Samples:  0</InfoLine>
          <InfoLine>Freq [Hz]: INF (cycle)</InfoLine>
          <InfoLine $gap={5}>RMS=1.06E-005</InfoLine>
        </InfoPanel>
      </Row>
      <Toolbar $h={52}>
        <ButtonGroup $after={5}><ViewTools /></ButtonGroup>
        <ButtonGroup $after={25}>
          <ToolButton><TargetIcon /></ToolButton>
          <ToolButton $on><BarsIcon /></ToolButton>
          <ToolButton><ScatterIcon /></ToolButton>
          <ToolButton $w={35}><CameraIcon /></ToolButton>
          <ToolButton $w={38}><NoteIcon /></ToolButton>
        </ButtonGroup>
        <FieldStrip $ml={0} $w={84}>
          <div>0</div>
          <div>0</div>
          <div>1</div>
        </FieldStrip>
        <Plain $ml={27} $w={36}><ToolButton $w={36}><ClockIcon /></ToolButton></Plain>
        <FieldStrip $ml={25} $w={83.4}>
          <div>0:0.00000</div>
          <div>0:0.00000</div>
          <div>0:0.00000</div>
        </FieldStrip>
        <Plain $ml={31} $w={106}>Time Display</Plain>
        <GroupBox $w={454} $h={39} $pad={9}>
          <Option $w={73}><RadioDot $on />Pulse</Option>
          <Option $w={61}><RadioDot />Step</Option>
          <Option $w={93}><RadioDot />RMSLog</Option>
          <Option $w={61}><RadioDot />ETC</Option>
          <Option $w={106.5}><RadioDot />Reverb</Option>
          <Option $w={44}><CheckFrame $on><Check /></CheckFrame>all</Option>
        </GroupBox>
      </Toolbar>
      <StatusBar>
        <Plain $w={796}>{"Selected Curve: 4   Status: modified"}</Plain>
        <ProgressBar />
        <VersionText>V3.1.6 ©2005-2024 by Dr. Ulrich Brüggemann, AudioVero</VersionText>
      </StatusBar>
    </Body>
  </Window>
);

export default App;
